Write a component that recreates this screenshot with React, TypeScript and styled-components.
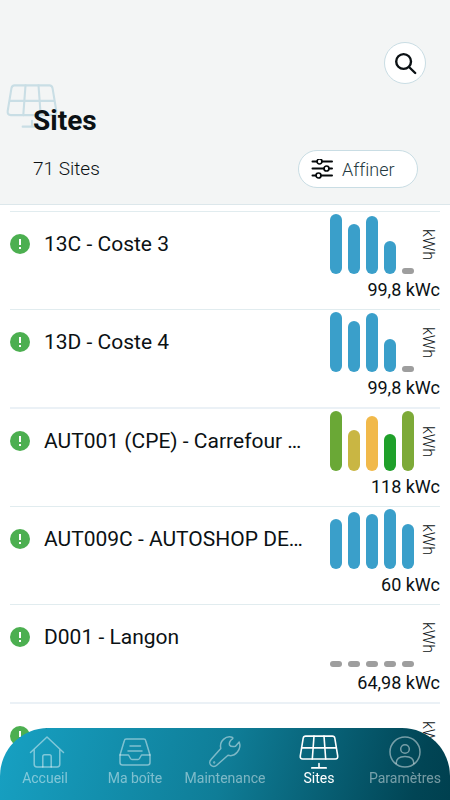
import React from "react";
import styled, { createGlobalStyle } from "styled-components";

const GlobalStyle = createGlobalStyle`
  *, *::before, *::after { box-sizing: border-box; }
  html, body, #root { height: 100%; }
  body {
    margin: 0;
    overflow: hidden;
    background: #ffffff;
    color: #0b1114;
    font-family: Roboto, "Liberation Sans", sans-serif;
    font-variant-ligatures: none;
  }
  button { font: inherit; color: inherit; cursor: pointer; }
`;

const Screen = styled.div`
  display: flex;
  flex-direction: column;
  height: 100%;
`;

const Header = styled.header`
  flex: none;
  display: flex;
  flex-direction: column;
  padding: 42px 24px 16px 33px;
  background: #f3f5f5;
  border-bottom: 1px solid #dce7eb;
`;

const SearchButton = styled.button`
  align-self: flex-end;
  display: grid;
  place-items: center;
  width: 42px;
  height: 42px;
  padding: 0;
  border: 1px solid #c9dde4;
  border-radius: 50%;
  background: #ffffff;
`;

const TitleBlock = styled.div`
  position: relative;
  margin-top: 20px;
`;

const TitleMark = styled.div`
  position: absolute;
  left: -27px;
  top: -20px;
  color: #c9dee5;
`;

const Title = styled.h1`
  position: relative;
  margin: 0;
  font-size: 28px;
  line-height: 34px;
  font-weight: 700;
`;

const Summary = styled.div`
  display: flex;
  align-items: center;
  justify-content: space-between;
  margin-top: 12px;
  padding-right: 8px;
`;

const Count = styled.p`
  margin: 0;
  font-size: 19px;
  line-height: 24px;
  font-weight: 300;
`;

const FilterButton = styled.button`
  display: flex;
  align-items: center;
  gap: 8px;
  width: 120px;
  height: 38px;
  padding: 0 0 0 12px;
  border: 1px solid #c9dde4;
  border-radius: 19px;
  background: #ffffff;
  color: #24393f;
  font-size: 18px;
  font-weight: 300;

  svg { color: #05090b; }
`;

const List = styled.ul`
  flex: 1;
  min-height: 0;
  overflow-y: auto;
  scrollbar-width: none;
  margin: 0;
  padding: 6px 10px 0;
  list-style: none;
`;

const Row = styled.li`
  border-top: 1px solid #e1ecef;

  &:nth-child(3n) { border-top: 2px solid #ebf1f6; }
`;

const SiteLine = styled.div`
  display: grid;
  grid-template-columns: 20px minmax(0, 1fr) 84px 20px;
  align-items: center;
  height: 64px;
  padding-right: 6px;
`;

const SiteName = styled.h2`
  margin: 0 24px 0 14px;
  overflow: hidden;
  white-space: nowrap;
  text-overflow: ellipsis;
  font-size: 21px;
  line-height: 26px;
  font-weight: 400;
`;

const Bars = styled.div`
  display: flex;
  align-items: flex-end;
  gap: 6px;
  height: 60px;
`;

const Bar = styled.span<{ $color: string }>`
  flex: 1;
  border-radius: 6px;
  background: ${(p) => p.$color};
`;

const Unit = styled.span`
  margin-left: 6px;
  writing-mode: vertical-rl;
  justify-self: start;
  font-size: 16px;
  line-height: 16px;
  font-weight: 300;
`;

const Capacity = styled.p`
  margin: 0;
  height: 33px;
  text-align: right;
  font-size: 18px;
  line-height: 28px;
  font-weight: 450;
`;

const Nav = styled.nav`
  position: fixed;
  inset: auto 0 0 0;
  display: grid;
  grid-template-columns:
    minmax(0, 90fr) minmax(0, 90fr) minmax(0, 90fr)
    minmax(0, 98fr) minmax(0, 74fr);
  height: 72px;
  padding: 7px 8px 0 0;
  border-radius: 48px 48px 0 0;
  background: linear-gradient(105deg, #17a1c3 0%, #0f7d97 50%, #014555 92%, #00404f 100%);
`;

const NavLink = styled.a<{ $active?: boolean }>`
  display: flex;
  flex-direction: column;
  align-items: center;
  color: ${(p) => (p.$active ? "#ffffff" : "rgba(255, 255, 255, 0.46)")};
  font-size: 14px;
  line-height: 16px;
  font-weight: 400;
  white-space: nowrap;
  text-decoration: none;

  svg {
    margin-bottom: 1px;
    overflow: visible;
  }
`;

const stroke = {
  fill: "none",
  stroke: "currentColor",
  strokeLinecap: "round",
  strokeLinejoin: "round",
} as const;

const PanelIcon = ({ width, height, weight }: { width: number; height: number; weight: number }) => (
  <svg width={width} height={height} viewBox="0 0 40 32" preserveAspectRatio="none" {...stroke} strokeWidth={weight} aria-hidden="true">
    <path d="M6.600 1h26.800q2 0 2.400 2l2.900 16.600q.4 3-2.400 3H3.700q-2.800 0-2.400-3L4.200 3q.4-2 2.400-2Z" />
    <path d="M15 1l-1.700 21.600M25 1l1.700 21.600M3 12.200h34M20 26.800V31M12.800 31h14.400" />
  </svg>
);

const SearchIcon = () => (
  <svg width="24" height="24" viewBox="0 0 24 24" {...stroke} strokeWidth="2.400" aria-hidden="true">
    <circle cx="10.600" cy="10.500" r="7.400" />
    <path d="M16 16l6.200 6" />
  </svg>
);

const SlidersIcon = () => (
  <svg width="23" height="21" viewBox="0 0 23 21" {...stroke} strokeWidth="2" aria-hidden="true">
    <path d="M1.500 2.500h4.500M11 2.500h10M1.500 9.500h11.500M18 9.500h3M1.500 16.500h3.500M10 16.500h11" />
    <circle cx="8.500" cy="2.500" r="2.500" strokeWidth="1.700" />
    <circle cx="15.500" cy="9.500" r="2.500" strokeWidth="1.700" />
    <circle cx="7.500" cy="16.500" r="2.500" strokeWidth="1.700" />
  </svg>
);

const StatusIcon = () => (
  <svg width="20" height="20" viewBox="0 0 20 20" role="img" aria-label="État du site">
    <circle cx="10" cy="10" r="10" fill="#4caf50" />
    <path d="M9 5h2v6H9ZM9 13h2v2H9Z" fill="#ffffff" />
  </svg>
);

const HomeIcon = () => (
  <svg width="36" height="34" viewBox="-2 0 36 34" {...stroke} strokeWidth="1.500" aria-hidden="true">
    <path d="M1.500 17.500L18 2l16.500 15.500M5.200 14.500v14.800q0 2.700 2.700 2.700h20.200q2.700 0 2.700-2.700V14.500" />
    <path d="M13.800 32V21.500q0-1.800 1.800-1.800h4.800q1.800 0 1.800 1.800V32" />
  </svg>
);

const InboxIcon = () => (
  <svg width="34" height="34" viewBox="0 0 34 34" {...stroke} strokeWidth="1.500" aria-hidden="true">
    <path d="M8.300 4h17.400q1.700 0 2 1.700L32 20v7.500q0 2.500-2.500 2.500h-25Q2 30 2 27.500V20L6.300 5.700Q6.600 4 8.300 4Z" />
    <path d="M2 20h8.500l2 3.500q.5 1 1.500 1h6q1 0 1.500-1l2-3.500H32M12 11h10.500M10 16h14" />
  </svg>
);

const WrenchIcon = () => (
  <svg width="34" height="34" viewBox="0 0 34 34" {...stroke} strokeWidth="1.500" aria-hidden="true">
    <path d="M24 2.200C18 .5 11 6 12.800 13.600L3 24.600a4 4 0 0 0 5.700 5.700L20 20.200C27.500 22.500 33.800 14 31.200 7L27.500 11.300q-4.500 1-6-1.300q-.9-3.500 3.200-6.400q.6-.9-.7-1.400Z" />
    <circle cx="6.200" cy="27.500" r=".4" />
  </svg>
);

const UserIcon = () => (
  <svg width="34" height="34" viewBox="0 0 34 34" {...stroke} strokeWidth="1.500" aria-hidden="true">
    <circle cx="17" cy="17" r="15" />
    <circle cx="17" cy="14" r="4.300" />
    <path d="M8.200 28.500c0-4.500 3.500-7 8.800-7s8.800 2.500 8.800 7" />
  </svg>
);

const BLUE = "#3a9fca";
const GREY = "#9e9e9e";

type BarDatum = [height: number, color: string];

interface Site {
  name: string;
  capacity: string;
  bars: BarDatum[];
}

const none: BarDatum[] = [[6, GREY], [6, GREY], [6, GREY], [6, GREY], [6, GREY]];

const sites: Site[] = [
  { name: "13C - Coste 3", capacity: "99,8 kWc", bars: [[60, BLUE], [50, BLUE], [58, BLUE], [33, BLUE], [6, GREY]] },
  { name: "13D - Coste 4", capacity: "99,8 kWc", bars: [[60, BLUE], [51, BLUE], [59, BLUE], [33, BLUE], [6, GREY]] },
  {
    name: "AUT001 (CPE) - Carrefour …",
    capacity: "118 kWc",
    bars: [[60, "#6aa836"], [41, "#c9b643"], [55, "#f1b94a"], [37, "#1fa02a"], [60, "#7daa38"]],
  },
  { name: "AUT009C - AUTOSHOP DE…", capacity: "60 kWc", bars: [[50, BLUE], [57, BLUE], [55, BLUE], [60, BLUE], [45, BLUE]] },
  { name: "D001 - Langon", capacity: "64,98 kWc", bars: none },
  { name: "D002 - Oloron", capacity: "", bars: [] },
];

const tabs = [
  { label: "Accueil", icon: <HomeIcon /> },
  { label: "Ma boîte", icon: <InboxIcon /> },
  { label: "Maintenance", icon: <WrenchIcon /> },
  { label: "Sites", icon: <PanelIcon width={40} height={34} weight={1.6} />, active: true },
  { label: "Paramètres", icon: <UserIcon /> },
];

export default function App() {
  return (
    <>
      <GlobalStyle />
      <Screen>
        <Header>
          <SearchButton type="button" aria-label="Rechercher">
            <SearchIcon />
          </SearchButton>
          <TitleBlock>
            <TitleMark>
              <PanelIcon width={52} height={44} weight={1.6} />
            </TitleMark>
            <Title>Sites</Title>
          </TitleBlock>
          <Summary>
            <Count>71 Sites</Count>
            <FilterButton type="button">
              <SlidersIcon />
              Affiner
            </FilterButton>
          </Summary>
        </Header>
        <List>
          {sites.map((site) => (
            <Row key={site.name}>
              <SiteLine>
                <StatusIcon />
                <SiteName>{site.name}</SiteName>
                <Bars>
                  {site.bars.map(([height, color], i) => (
                    <Bar key={i} $color={color} style={{ height }} />
                  ))}
                </Bars>
                <Unit>kWh</Unit>
              </SiteLine>
              <Capacity>{site.capacity}</Capacity>
            </Row>
          ))}
        </List>
        <Nav>
          {tabs.map((tab) => (
            <NavLink key={tab.label} href="#" $active={tab.active} aria-current={tab.active ? "page" : undefined}>
              {tab.icon}
              {tab.label}
            </NavLink>
          ))}
        </Nav>
      </Screen>
    </>
  );
}
